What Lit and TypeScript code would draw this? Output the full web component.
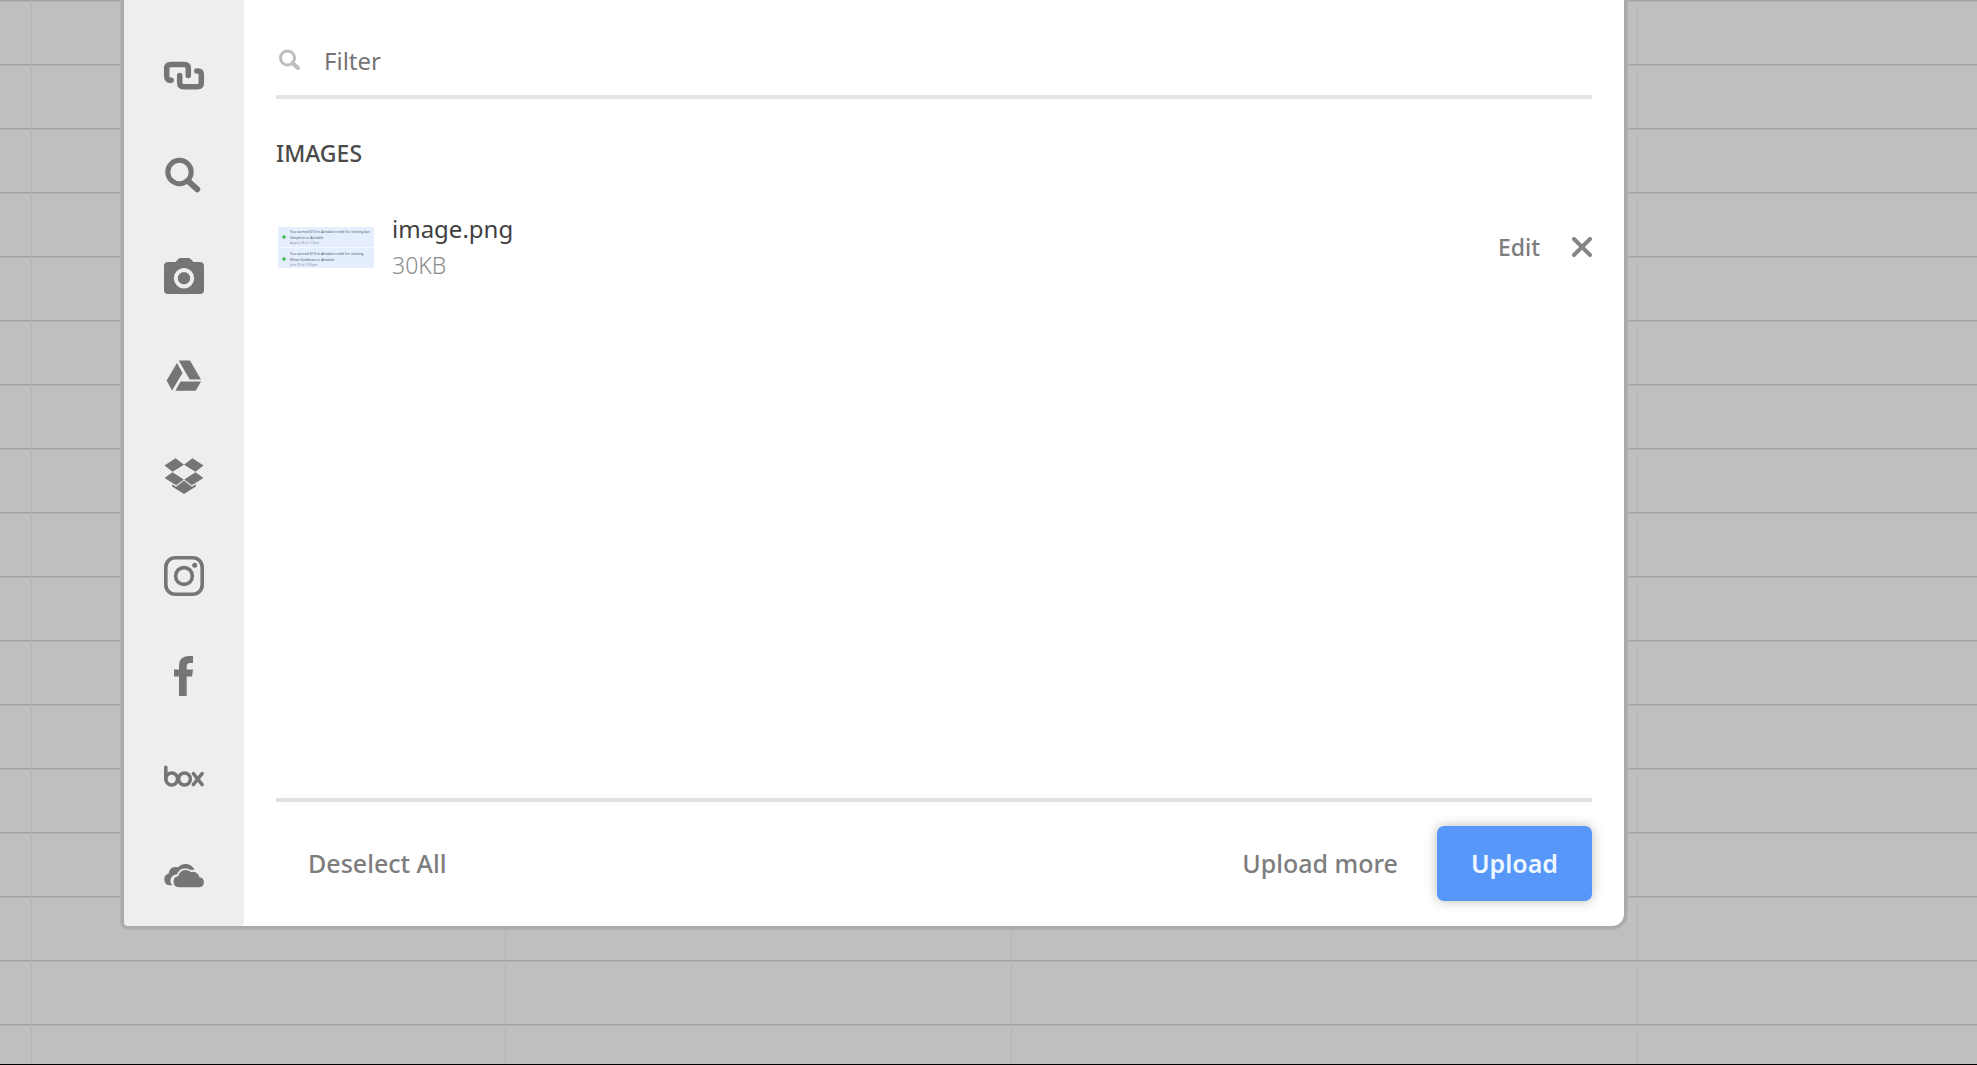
import { LitElement, html, svg, css } from "lit";
import { customElement, state } from "lit/decorators.js";

interface Source {
  name: string;
  art: unknown;
}

// Every source icon is drawn on a 40 x 40 canvas.
const sources: Source[] = [
  {
    name: "Link",
    art: svg`<g fill="none" stroke="currentColor" stroke-width="5.500" stroke-linecap="round" stroke-linejoin="round">
      <path d="M7.200 24.300H6.500Q2.700 24.300 2.700 20.300V12.500Q2.700 8.500 6.700 8.500H20.300Q24.300 8.500 24.300 12.500V19.500"/>
      <path d="M15.700 19.500V26.700Q15.700 30.700 19.700 30.700H33.300Q37.300 30.700 37.300 26.700V18.500Q37.300 14.900 33.700 14.900H32.800"/>
    </g>`,
  },
  {
    name: "Web search",
    art: svg`<circle cx="15.500" cy="16" r="11.700" fill="none" stroke="currentColor" stroke-width="5"/>
      <path d="M24 25L33.200 33.200" stroke="currentColor" stroke-width="6" stroke-linecap="round"/>`,
  },
  {
    name: "Camera",
    art: svg`<path fill-rule="evenodd" d="M4 6H11.500L14.500 2.800Q15.300 2 16.500 2H24.500Q25.700 2 26.500 2.800L29.500 6H36Q40 6 40 10V34Q40 38 36 38H4Q0 38 0 34V10Q0 6 4 6ZM20 12A10.200 10.200 0 1 0 20 32.400A10.200 10.200 0 1 0 20 12ZM20 16A6.200 6.200 0 1 1 20 28.400A6.200 6.200 0 1 1 20 16Z"/>`,
  },
  {
    name: "Google Drive",
    art: svg`<path d="M14.700 4.500H26L37 23.500H25.700ZM13 7L18.500 17L8 34.500L2.600 24.600ZM16.600 25.500H37L31.700 34.700H11.300Z"/>`,
  },
  {
    name: "Dropbox",
    art: svg`<path d="M11.500 2.300L20 8.700L8.500 15.700L0.500 9.600ZM28.500 2.300L39.500 9.600L31.500 15.700L20 8.700ZM8.500 16.200L19.700 23.500L12.200 29.300L0.500 22ZM31.500 16.200L39.500 22L27.800 29.300L20.300 23.500ZM20 24.600L27.800 30.700L31.900 28.200V30.400L20 38L8.100 30.400V28.200L12.200 30.700Z"/>`,
  },
  {
    name: "Instagram",
    art: svg`<rect x="1.800" y="1.800" width="36.400" height="36.400" rx="9.500" fill="none" stroke="currentColor" stroke-width="3.600"/>
      <circle cx="20" cy="20" r="8.400" fill="none" stroke="currentColor" stroke-width="3.600"/>
      <circle cx="30.700" cy="9.300" r="2.500"/>`,
  },
  {
    name: "Facebook",
    art: svg`<path d="M15 40V20.500H10V13.600H15V10Q15 0 24.800 0H29V7H26Q22.700 7 22.700 10.500V13.600H29L28 20.500H22.700V40Z"/>`,
  },
  {
    name: "Box",
    art: svg`<g fill="none" stroke="currentColor" stroke-width="3.500" stroke-linecap="round">
      <path d="M1.800 11.300V23"/>
      <circle cx="7.700" cy="23" r="5.900"/>
      <circle cx="20.500" cy="23" r="5.900"/>
      <path d="M29.300 17.500L38.200 28.700M38.200 17.500L29.300 28.700"/>
    </g>`,
  },
  {
    name: "OneDrive",
    art: svg`<path d="M8.500 29.300H6A6 6 0 0 1 4.800 17.500A6.300 6.300 0 0 1 11.500 11Q13 10.900 14 11.300A9.800 9.800 0 0 1 30.500 14Q28 13.300 26.400 14.100A8.800 8.800 0 0 0 12.900 18.400A6.300 6.300 0 0 0 8.500 29.300Z"/>
      <path d="M14.700 31.200A5.700 5.700 0 0 1 14.300 19.900A7.700 7.700 0 0 1 27 16A6.900 6.900 0 0 1 35.500 21.200A5.050 5.050 0 0 1 35.500 31.200Z"/>`,
  },
];

@customElement("source-rail")
export class SourceRail extends LitElement {
  static styles = css`
    :host {
      display: block;
      flex: none;
      width: 120px;
      background: #eeeeee;
      border-radius: 0 0 4px 4px;
    }
    .list {
      display: flex;
      flex-direction: column;
      padding-top: 26px;
    }
    .source {
      display: flex;
      align-items: center;
      justify-content: center;
      height: 100px;
      padding: 0;
      border: 0;
      background: none;
      color: #757575;
      cursor: pointer;
    }
    .source:last-child {
      height: 99px;
    }
    .icon {
      width: 40px;
      height: 40px;
      fill: currentColor;
      overflow: visible;
    }
  `;

  render() {
    return html`<nav class="list" aria-label="Upload sources">
      ${sources.map(
        (s) => html`<button class="source" type="button" aria-label=${s.name}>
          <svg class="icon" viewBox="0 0 40 40" aria-hidden="true">${s.art}</svg>
        </button>`
      )}
    </nav>`;
  }
}

const notices = [
  { lines: ["You earned $10 in Airtable credit for inviting Ian", "Simpkins to Airtable"], date: "August 28 at 1:16pm" },
  { lines: ["You earned $10 in Airtable credit for inviting", "Ethan Goldman to Airtable"], date: "June 20 at 12:05pm" },
];

@customElement("app-root")
export class AppRoot extends LitElement {
  static styles = css`
    :host {
      display: flex;
      box-sizing: border-box;
      min-height: 100vh;
      padding: 0 353px 138px 124px;
      border-bottom: 1px solid #000000;
      font-family: "Noto Sans", "Open Sans", sans-serif;
      background:
        linear-gradient(#b3b5b4, #b3b5b4) 31px 0 / 1px 100% no-repeat,
        linear-gradient(#b3b5b4, #b3b5b4) 505px 0 / 1px 100% no-repeat,
        linear-gradient(#b3b5b4, #b3b5b4) 1011px 0 / 1px 100% no-repeat,
        linear-gradient(#b3b5b4, #b3b5b4) 1637px 0 / 1px 100% no-repeat,
        repeating-linear-gradient(#a2a4a4 0 1px, #b0b2b2 1px 2px, #bfbfbf 2px 64px);
    }
    .dialog {
      display: flex;
      flex: 1;
      min-width: 0;
      background: #ffffff;
      border-radius: 0 0 12px 5px;
      box-shadow: 0 0 0 3px #a9aaaa, 0 0 0 4px #b2b3b3;
    }
    .panel {
      display: flex;
      flex: 1;
      flex-direction: column;
      min-width: 0;
      padding: 0 32px;
    }
    .filter {
      display: flex;
      align-items: center;
      gap: 24px;
      height: 70px;
      padding: 25px 0 0 2px;
      border-bottom: 4px solid #e3e3e3;
      color: #bdbdbd;
    }
    .filter-icon {
      width: 22px;
      height: 22px;
    }
    .filter-input {
      flex: 1;
      min-width: 0;
      padding: 2px 0 0;
      border: 0;
      outline: 0;
      background: none;
      color: #757575;
      font: 24px/32px "Noto Sans", "Open Sans", sans-serif;
    }
    .filter-input::placeholder {
      color: #757575;
      opacity: 1;
    }
    .files {
      flex: 1;
    }
    .heading {
      margin: 38px 0 0;
      color: #4a4a4a;
      font-size: 23px;
      line-height: 32px;
      font-weight: 500;
    }
    .list {
      margin: 0;
      padding: 0;
      list-style: none;
    }
    .file {
      display: flex;
      align-items: center;
      padding: 42px 0 0 2px;
    }
    .thumb {
      flex: none;
      width: 96px;
      height: 41px;
    }
    .meta {
      flex: 1;
      min-width: 0;
      padding-left: 18px;
    }
    .name {
      color: #404040;
      font-size: 24px;
      line-height: 36px;
    }
    .size {
      color: #8c8c8c;
      font-size: 23px;
      line-height: 36px;
      font-weight: 300;
    }
    .plain {
      padding: 0;
      border: 0;
      background: none;
      color: #7d7d7d;
      font: 500 23px/32px "Noto Sans", "Open Sans", sans-serif;
      cursor: pointer;
    }
    .close {
      display: flex;
      margin-left: 32px;
      color: #858585;
    }
    .close-icon {
      width: 20px;
      height: 20px;
    }
    .bar {
      display: flex;
      flex: none;
      align-items: center;
      height: 122px;
      padding: 0 0 2px 32px;
      border-top: 4px solid #e3e3e3;
    }
    .spacer {
      flex: 1;
    }
    .large {
      font-size: 25px;
    }
    .upload {
      height: 75px;
      margin-left: 39px;
      padding: 0 34px;
      border: 0;
      border-radius: 7px;
      background: #5697f9;
      color: #eef7ff;
      box-shadow: 0 0 12px rgba(60, 60, 40, 0.35);
      font: 600 25px/32px "Noto Sans", "Open Sans", sans-serif;
      cursor: pointer;
    }
  `;

  @state() private query = "";

  private onInput(e: Event) {
    this.query = (e.target as HTMLInputElement).value;
  }

  private renderThumb() {
    return html`<svg class="thumb" viewBox="0 0 96 41" role="img" aria-label="Preview of image.png">
      <rect width="96" height="41" fill="#e4eefc" />
      <rect y="20" width="96" height="1" fill="#f5f9ff" />
      ${notices.map(
        (n, i) => svg`<g transform="translate(0 ${i * 22})" font-size="3.550" fill="#50586a">
          <circle cx="6" cy="10" r="1.800" fill="#3fb950"/>
          <text x="12" y="6">${n.lines[0]}</text>
          <text x="12" y="11.500">${n.lines[1]}</text>
          <text x="12" y="17" font-size="3" fill="#8a93a3">${n.date}</text>
        </g>`
      )}
    </svg>`;
  }

  render() {
    const files = [{ name: "image.png", size: "30KB" }].filter((f) => f.name.includes(this.query));
    return html`<section class="dialog" role="dialog" aria-label="Upload files">
      <source-rail></source-rail>
      <div class="panel">
        <label class="filter">
          <svg class="filter-icon" viewBox="0 0 22 22" fill="none" stroke="currentColor" aria-hidden="true">
            <circle cx="9.500" cy="9" r="7" stroke-width="3" />
            <path d="M14.500 14L20 19" stroke-width="4" stroke-linecap="round" />
          </svg>
          <input class="filter-input" type="text" placeholder="Filter" aria-label="Filter" .value=${this.query} @input=${this.onInput} />
        </label>
        <div class="files">
          <h2 class="heading">IMAGES</h2>
          <ul class="list">
            ${files.map(
              (f) => html`<li class="file">
                ${this.renderThumb()}
                <div class="meta">
                  <div class="name">${f.name}</div>
                  <div class="size">${f.size}</div>
                </div>
                <button class="plain" type="button">Edit</button>
                <button class="plain close" type="button" aria-label="Remove">
                  <svg class="close-icon" viewBox="0 0 20 20" fill="none" stroke="currentColor" stroke-width="4" stroke-linecap="round" aria-hidden="true">
                    <path d="M2 2L18 18M18 2L2 18" />
                  </svg>
                </button>
              </li>`
            )}
          </ul>
        </div>
        <div class="bar">
          <button class="plain large" type="button">Deselect All</button>
          <span class="spacer"></span>
          <button class="plain large" type="button">Upload more</button>
          <button class="upload" type="button">Upload</button>
        </div>
      </div>
    </section>`;
  }
}
